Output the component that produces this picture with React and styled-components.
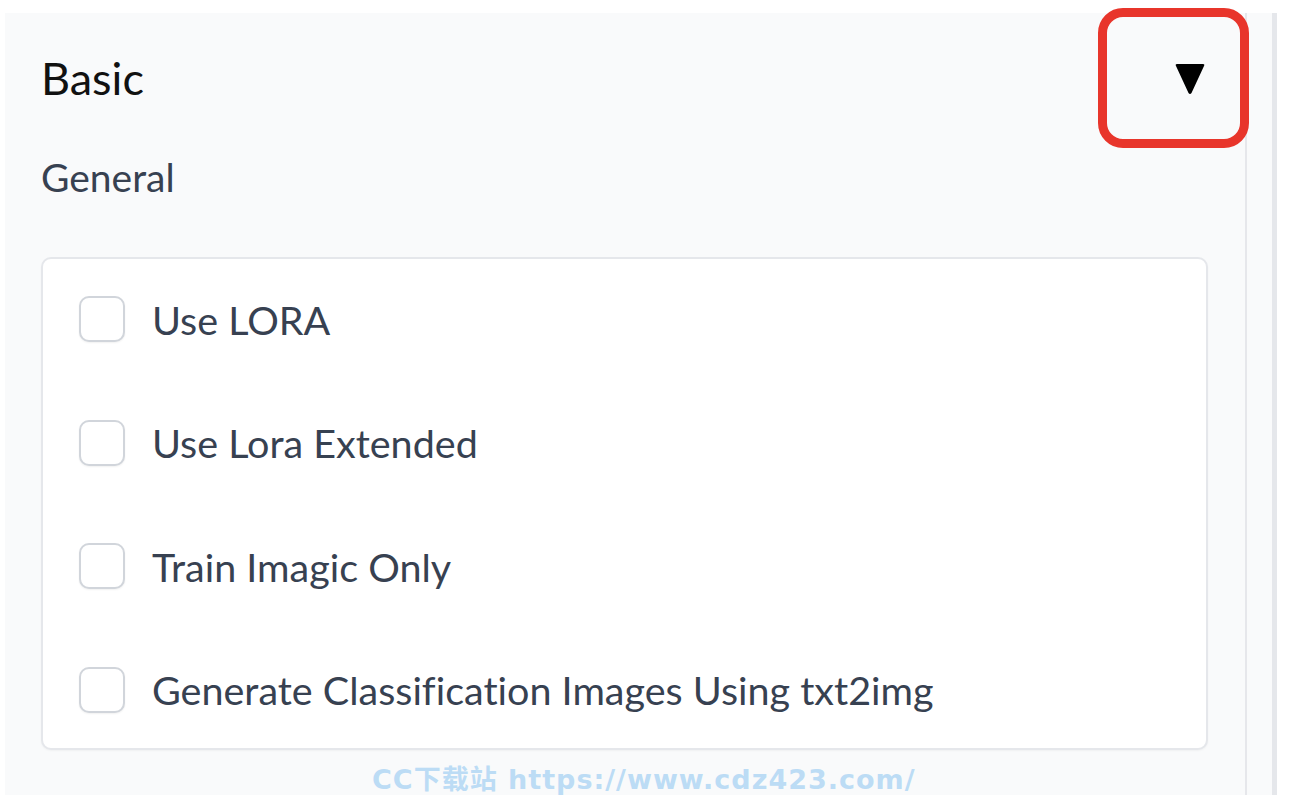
import React from "react";
import styled, { createGlobalStyle } from "styled-components";

const Global = createGlobalStyle`
  html, body { margin: 0; padding: 0; background: #ffffff; }
  body {
    font-family: Lato, "Noto Sans", sans-serif;
    font-variant-ligatures: none;
  }
`;

const Page = styled.div`
  position: relative;
  width: 1294px;
  height: 808px;
  padding: 13px 0 0 5px;
  box-sizing: border-box;
  display: flex;
  align-items: flex-start;
`;

const Panel = styled.section`
  width: 1242px;
  height: 782px;
  background: #f9fafb;
  border-right: 2px solid #e6e7eb;
  padding: 0 0 0 36px;
  box-sizing: border-box;
  display: flex;
  flex-direction: column;
`;

const Gutter = styled.div`
  width: 25px;
  height: 782px;
  background: #f9fafb;
  border-right: 5px solid #e5e7eb;
`;

const Header = styled.div`
  display: flex;
  align-items: center;
  justify-content: space-between;
  height: 130px;
  padding-right: 40px;
`;

const Title = styled.h2`
  margin: 0;
  font-size: 45px;
  font-weight: 400;
  color: #111111;
`;

const Caret = styled.svg`
  width: 30px;
  height: 32px;
  margin-top: 2px;
`;

const Section = styled.div`
  font-size: 39px;
  color: #374151;
  margin-top: 15px;
  line-height: 1;
`;

const Card = styled.div`
  margin-top: 60px;
  width: 1167px;
  height: 493px;
  box-sizing: border-box;
  background: #ffffff;
  border: 2px solid #e5e7eb;
  border-radius: 10px;
  box-shadow: 0 1px 2px rgba(0, 0, 0, 0.04);
  padding: 37px 0 0 36px;
  display: flex;
  flex-direction: column;
  gap: 77.5px;
`;

const Row = styled.label`
  display: flex;
  align-items: center;
  gap: 27px;
  height: 46px;
  font-size: 39.5px;
  color: #374151;
`;

const Box = styled.span`
  width: 46px;
  height: 46px;
  box-sizing: border-box;
  border: 2px solid #d1d5db;
  border-radius: 10px;
  background: #ffffff;
  box-shadow: 0 1px 2px rgba(0, 0, 0, 0.06);
  flex: none;
`;

const Annotation = styled.div`
  position: absolute;
  left: 1098px;
  top: 8px;
  width: 151px;
  height: 140px;
  box-sizing: border-box;
  border: 9px solid #e8352b;
  border-radius: 25px;
  pointer-events: none;
`;

const Watermark = styled.div`
  position: absolute;
  left: 372px;
  top: 758px;
  font-family: "DejaVu Sans", "Noto Sans CJK SC", sans-serif;
  font-weight: 700;
  font-size: 27px;
  letter-spacing: 1px;
  color: #bcdcf5;
  white-space: nowrap;
  pointer-events: none;
`;

const items = [
  "Use LORA",
  "Use Lora Extended",
  "Train Imagic Only",
  "Generate Classification Images Using txt2img",
];

export default function App() {
  return (
    <>
      <Global />
      <Page>
        <Panel>
          <Header>
            <Title>Basic</Title>
            <Caret viewBox="0 0 30 32">
              <path d="M2 1 H28 Q30 1 29 3 L16.5 30 Q15 32 13.5 30 L1 3 Q0 1 2 1 Z" fill="#000" />
            </Caret>
          </Header>
          <Section>General</Section>
          <Card>
            {items.map((t) => (
              <Row key={t}>
                <Box />
                {t}
              </Row>
            ))}
          </Card>
        </Panel>
        <Gutter />
        <Annotation />
        <Watermark>CC下载站 https://www.cdz423.com/</Watermark>
      </Page>
    </>
  );
}
